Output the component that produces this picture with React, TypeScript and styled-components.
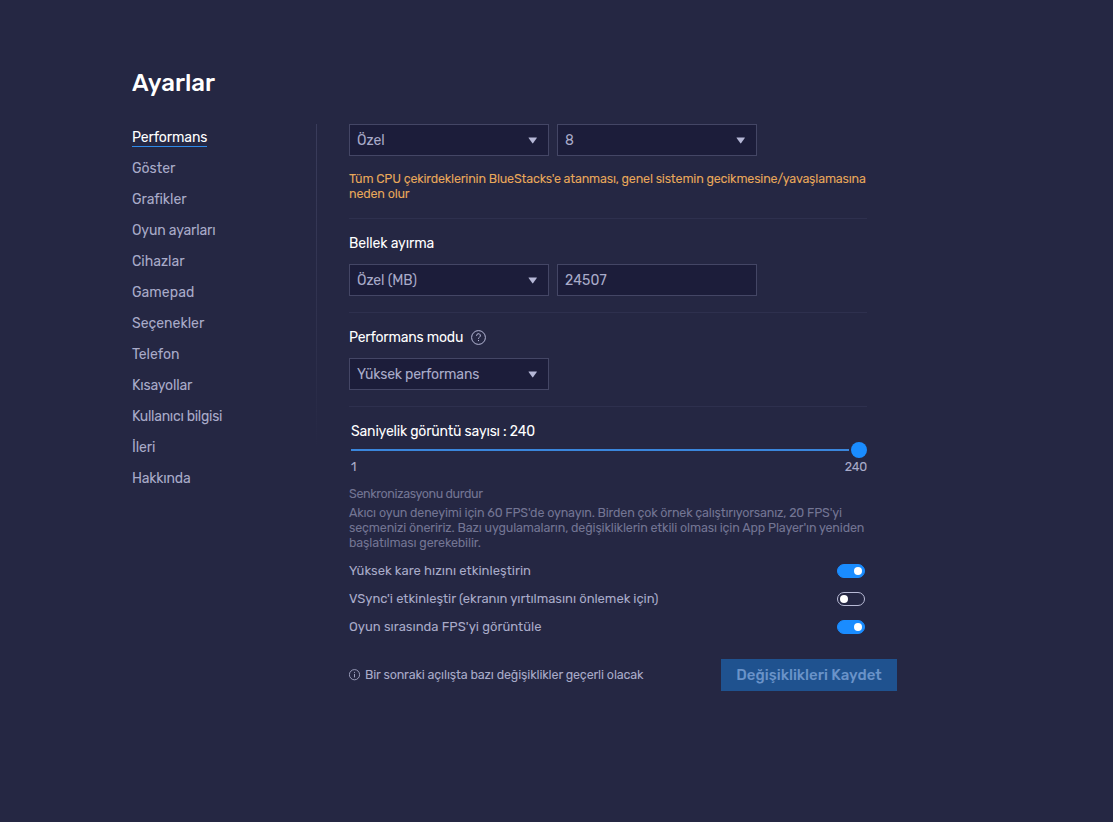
import * as React from 'react';
import styled, { createGlobalStyle, css } from 'styled-components';

const GlobalStyle = createGlobalStyle`
  * {
    box-sizing: border-box;
  }

  body {
    margin: 0;
    background: #252743;
    color: #a9abc9;
    font-family: Rubik, Roboto, sans-serif;
    font-size: 14px;
  }
`;

const Page = styled.div`
  height: 822px;
  padding: 67px 216px 0 132px;
  background: #252743;
`;

const Title = styled.h1`
  margin: 0 0 25px;
  font-size: 24px;
  line-height: 32px;
  font-weight: 500;
  letter-spacing: 0.05px;
  color: #fff;
`;

const Columns = styled.div`
  display: flex;
`;

const Nav = styled.nav`
  width: 184px;
  display: flex;
  flex-direction: column;
  align-items: flex-start;
  gap: 11px;
  padding-top: 3px;
`;

const NavItem = styled.a<{ $active?: boolean; $track: number }>`
  height: 20px;
  line-height: 22px;
  letter-spacing: ${(p) => p.$track}px;
  white-space: nowrap;
  ${(p) =>
    p.$active &&
    css`
      color: #fff;
      border-bottom: 1px solid #2f8ae8;
    `}
`;

const Divider = styled.div`
  width: 1px;
  height: 326px;
  margin-right: 32px;
  background: linear-gradient(#3a3c5b, #33355299 70%, transparent);
`;

const Content = styled.main`
  width: 548px;
`;

const Section = styled.section<{ $height: number }>`
  width: 518px;
  height: ${(p) => p.$height}px;
  border-bottom: 1px solid #2e304e;
`;

const Label = styled.div<{ $track?: number }>`
  display: flex;
  align-items: center;
  gap: 8px;
  height: 20px;
  color: #fff;
  letter-spacing: ${(p) => p.$track ?? 0}px;
  white-space: nowrap;
`;

const Fields = styled.div`
  display: flex;
  gap: 8px;
`;

const Field = styled.div<{ $track?: number }>`
  width: 200px;
  height: 32px;
  padding: 0 10px 0 7px;
  display: flex;
  align-items: center;
  justify-content: space-between;
  border: 1px solid #444665;
  background: #1c1d3a;
  letter-spacing: ${(p) => p.$track ?? 0}px;
`;

const Note = styled.p<{ $warning?: boolean; $track?: number }>`
  margin: 0;
  font-size: 12.5px;
  line-height: 15px;
  letter-spacing: ${(p) => p.$track ?? -0.17}px;
  white-space: nowrap;
  color: ${(p) => (p.$warning ? '#e9a75a' : '#737593')};
`;

const Slider = styled.div`
  display: flex;
  align-items: center;
  gap: 2px;
  height: 16px;
  margin-left: 2px;
`;

const Track = styled.div`
  width: 498px;
  height: 2px;
  background: #3a86dc;
`;

const Thumb = styled.div`
  width: 16px;
  height: 16px;
  border-radius: 50%;
  background: #1a8cff;
`;

const Range = styled.div`
  display: flex;
  justify-content: space-between;
  width: 516px;
  margin-left: 2px;
  font-size: 12.5px;
  line-height: 18px;
  letter-spacing: -0.25px;
`;

const ToggleRow = styled.div<{ $track: number }>`
  display: flex;
  align-items: center;
  justify-content: space-between;
  width: 516px;
  height: 28px;
  font-size: 13px;
  letter-spacing: ${(p) => p.$track}px;

  > :first-child {
    padding-bottom: 2px;
  }
`;

const Toggle = styled.span<{ $on: boolean }>`
  width: 28px;
  height: 14px;
  padding: 0 2px;
  display: flex;
  align-items: center;
  justify-content: ${(p) => (p.$on ? 'flex-end' : 'flex-start')};
  border: 1px solid ${(p) => (p.$on ? '#1a8cff' : '#b9bbd6')};
  border-radius: 7px;
  background: ${(p) => (p.$on ? '#1a8cff' : 'transparent')};

  &::after {
    content: '';
    width: 8px;
    height: 8px;
    border-radius: 50%;
    background: #fff;
  }
`;

const Footer = styled.footer`
  display: flex;
  align-items: center;
  justify-content: space-between;
  height: 32px;
  margin-top: 18px;
  font-size: 12.5px;
`;

const Hint = styled.div`
  display: flex;
  align-items: center;
  gap: 4px;
  letter-spacing: -0.13px;

  > span {
    padding-bottom: 2px;
  }
`;

const SaveButton = styled.button`
  width: 176px;
  height: 32px;
  padding: 0;
  border: 0;
  background: #1f528f;
  color: #6a93c9;
  font: 500 15px Rubik, Roboto, sans-serif;
`;

const Caret = () => (
  <svg width="10" height="7" viewBox="0 0 10 7">
    <path d="M0.8 0.5h7.8q.5 0 .2.5L5.2 6.1q-.5.6-1 0L.6 1q-.3-.5.2-.5z" fill="#b5b7d6" />
  </svg>
);

const HelpIcon = () => (
  <svg width="15" height="15" viewBox="0 0 15 15" fill="none" stroke="#b5b7d6">
    <circle cx="7.5" cy="7.5" r="6.9" />
    <path d="M5.6 6V5.7a1.9 1.9 0 1 1 2.9 1.5c-.7.4-1 .8-1 1.6" />
    <path d="M7.5 10v1.1" />
  </svg>
);

const InfoIcon = () => (
  <svg width="12" height="12" viewBox="0 0 12 12" fill="none" stroke="#a9abc9">
    <circle cx="5.5" cy="5.7" r="5.1" strokeWidth=".85" />
    <path d="M5.5 4.9v3.5M5.5 2.9v1" strokeWidth=".9" />
  </svg>
);

const navItems = [
  { name: 'Performans', track: -0.12 },
  { name: 'Göster', track: 0 },
  { name: 'Grafikler', track: -0.05 },
  { name: 'Oyun ayarları', track: -0.16 },
  { name: 'Cihazlar', track: 0 },
  { name: 'Gamepad', track: 0.05 },
  { name: 'Seçenekler', track: 0 },
  { name: 'Telefon', track: 0 },
  { name: 'Kısayollar', track: -0.18 },
  { name: 'Kullanıcı bilgisi', track: -0.28 },
  { name: 'İleri', track: -0.1 },
  { name: 'Hakkında', track: -0.2 },
];

const toggles = [
  { name: 'Yüksek kare hızını etkinleştirin', track: 0.03, on: true },
  { name: "VSync'i etkinleştir (ekranın yırtılmasını önlemek için)", track: -0.03, on: false },
  { name: "Oyun sırasında FPS'yi görüntüle", track: 0.02, on: true },
];

const CpuSection = styled(Section)`
  ${Fields} {
    margin-bottom: 15px;
  }
`;

const LabelledSection = styled(Section)`
  padding-top: 14px;

  ${Label} {
    margin-bottom: 11px;
  }
`;

const FrameRate = styled.div`
  padding-top: 14px;

  > ${Label} {
    margin: 0 0 1px 2px;
  }
`;

const Description = styled.div`
  margin: 10px 0 7px;

  > :first-child {
    margin-bottom: 4px;
  }
`;

export default function App() {
  return (
    <>
      <GlobalStyle />
      <Page>
        <Title>Ayarlar</Title>
        <Columns>
          <Nav>
            {navItems.map((item, i) => (
              <NavItem key={item.name} $active={i === 0} $track={item.track}>
                {item.name}
              </NavItem>
            ))}
          </Nav>
          <Divider />
          <Content>
            <CpuSection $height={95}>
              <Fields>
                <Field>Özel<Caret /></Field>
                <Field>8<Caret /></Field>
              </Fields>
              <Note $warning $track={-0.18}>
                Tüm CPU çekirdeklerinin BlueStacks'e atanması, genel sistemin gecikmesine/yavaşlamasına
              </Note>
              <Note $warning>neden olur</Note>
            </CpuSection>
            <LabelledSection $height={94}>
              <Label $track={-0.1}>Bellek ayırma</Label>
              <Fields>
                <Field $track={-0.1}>Özel (MB)<Caret /></Field>
                <Field $track={0.1}>24507</Field>
              </Fields>
            </LabelledSection>
            <LabelledSection $height={94}>
              <Label $track={-0.2}>
                Performans modu
                <HelpIcon />
              </Label>
              <Field $track={-0.17}>Yüksek performans<Caret /></Field>
            </LabelledSection>
            <FrameRate>
              <Label $track={-0.18}>Saniyelik görüntü sayısı : 240</Label>
              <Slider>
                <Track />
                <Thumb />
              </Slider>
              <Range>
                <span>1</span>
                <span>240</span>
              </Range>
            </FrameRate>
            <Description>
              <Note $track={-0.38}>Senkronizasyonu durdur</Note>
              <Note $track={-0.16}>
                Akıcı oyun deneyimi için 60 FPS'de oynayın. Birden çok örnek çalıştırıyorsanız, 20 FPS'yi
              </Note>
              <Note $track={-0.14}>
                seçmenizi öneririz. Bazı uygulamaların, değişikliklerin etkili olması için App Player'ın yeniden
              </Note>
              <Note $track={-0.13}>başlatılması gerekebilir.</Note>
            </Description>
            {toggles.map((t) => (
              <ToggleRow key={t.name} $track={t.track}>
                <span>{t.name}</span>
                <Toggle $on={t.on} />
              </ToggleRow>
            ))}
            <Footer>
              <Hint>
                <InfoIcon />
                <span>Bir sonraki açılışta bazı değişiklikler geçerli olacak</span>
              </Hint>
              <SaveButton>Değişiklikleri Kaydet</SaveButton>
            </Footer>
          </Content>
        </Columns>
      </Page>
    </>
  );
}
